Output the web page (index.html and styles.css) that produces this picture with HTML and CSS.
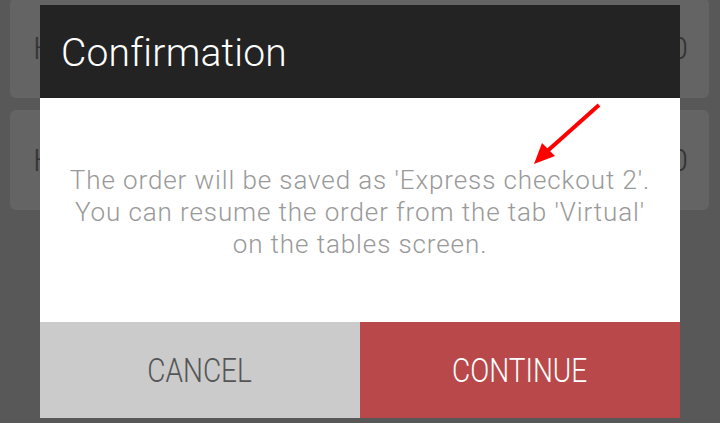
FILE: index.html
```html
<!DOCTYPE html>
<html lang="en">
<head>
    <meta charset="UTF-8">
    <meta name="viewport" content="width=device-width, initial-scale=1.0">
    <title>Confirmation</title>
    <link rel="stylesheet" href="styles.css">
</head>
<body>
    <div class="list">
        <div class="card first">
            <span class="card-name">H</span>
            <span class="card-value">0</span>
        </div>
        <div class="card">
            <span class="card-name">H</span>
            <span class="card-value">0</span>
        </div>
    </div>

    <div class="dialog">
        <div class="dialog-header">Confirmation</div>
        <div class="dialog-body">
            <p>The order will be saved as 'Express checkout 2'.<br>
            You can resume the order from the tab 'Virtual'<br>
            on the tables screen.</p>
        </div>
        <div class="dialog-buttons">
            <button class="btn btn-cancel"><span>CANCEL</span></button>
            <button class="btn btn-continue"><span>CONTINUE</span></button>
        </div>
    </div>

    <svg class="arrow" width="80" height="70" viewBox="0 0 80 70">
        <line x1="75" y1="4" x2="20" y2="53" stroke="#ff0000" stroke-width="4"/>
        <polygon points="10,63 18,42 31,55" fill="#ff0000"/>
    </svg>
</body>
</html>
```

FILE: styles.css
```css
body {
    margin: 0;
    background-color: #585858;
    font-family: Roboto, "Noto Sans", sans-serif;
    font-weight: 300;
    overflow: hidden;
    height: 423px;
}
.list {
    padding: 0 11px 0 10px;
    display: flex;
    flex-direction: column;
    gap: 12px;
}
.card {
    height: 100px;
    background-color: #646464;
    border-radius: 6px;
    display: flex;
    align-items: center;
    justify-content: space-between;
    padding: 0 21px 0 23px;
    color: #333;
    font-size: 32px;
}
.card.first {
    margin-top: -2px;
}
.dialog {
    position: absolute;
    left: 40px;
    top: 5px;
    width: 640px;
    display: flex;
    flex-direction: column;
}
.dialog-header {
    height: 93px;
    background-color: #232323;
    color: #fff;
    font-size: 39px;
    letter-spacing: 0.2px;
    line-height: 89px;
    padding: 4px 0 0 21px;
    box-sizing: border-box;
}
.dialog-body {
    height: 224px;
    background-color: #fff;
    display: flex;
    align-items: center;
    justify-content: center;
    padding-top: 4px;
    box-sizing: border-box;
}
.dialog-body p {
    margin: 0;
    text-align: center;
    color: #999;
    font-size: 26px;
    letter-spacing: 0.9px;
    line-height: 32px;
}
.dialog-buttons {
    display: flex;
    height: 96px;
}
.btn {
    flex: 1;
    border: none;
    font-family: Roboto, "Noto Sans", sans-serif;
    font-weight: 300;
    font-size: 33px;
    padding: 0;
    cursor: pointer;
}
.btn span {
    display: inline-block;
    transform: scaleX(0.85);
}
.btn-cancel {
    background-color: #cbcbcb;
    color: #555;
}
.btn-continue {
    background-color: #b84849;
    color: #fff;
}
.arrow {
    position: absolute;
    left: 524px;
    top: 101px;
}
```
